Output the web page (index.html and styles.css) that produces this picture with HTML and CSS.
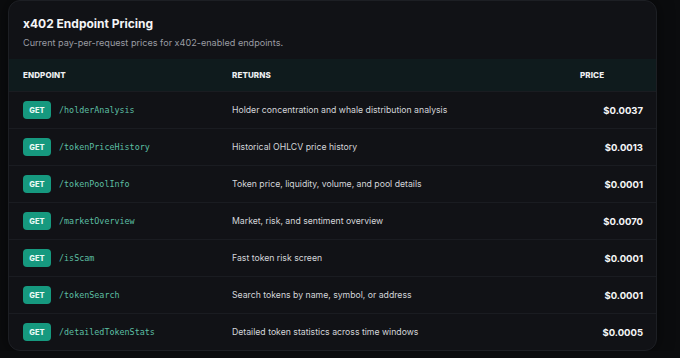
FILE: index.html
```html
<!DOCTYPE html>
<html lang="en">

<head>
    <meta charset="UTF-8" />
    <meta name="viewport" content="width=device-width, initial-scale=1.0" />
    <title>x402 Endpoint Pricing</title>
    <link rel="stylesheet" href="styles.css">
</head>

<body>
    <section class="card">
        <div class="card-head">
            <h2>x402 Endpoint Pricing</h2>
            <p>Current pay-per-request prices for x402-enabled endpoints.</p>
        </div>

        <div class="table">
            <div class="row head">
                <div>Endpoint</div>
                <div>Returns</div>
                <div>Price</div>
            </div>
            <div class="row">
                <div class="ep"><span class="badge">GET</span><code>/holderAnalysis</code></div>
                <div class="ret">Holder concentration and whale distribution analysis</div>
                <div class="price">$0.0037</div>
            </div>
            <div class="row">
                <div class="ep"><span class="badge">GET</span><code>/tokenPriceHistory</code></div>
                <div class="ret">Historical OHLCV price history</div>
                <div class="price">$0.0013</div>
            </div>
            <div class="row">
                <div class="ep"><span class="badge">GET</span><code>/tokenPoolInfo</code></div>
                <div class="ret">Token price, liquidity, volume, and pool details</div>
                <div class="price">$0.0001</div>
            </div>
            <div class="row">
                <div class="ep"><span class="badge">GET</span><code>/marketOverview</code></div>
                <div class="ret">Market, risk, and sentiment overview</div>
                <div class="price">$0.0070</div>
            </div>
            <div class="row">
                <div class="ep"><span class="badge">GET</span><code>/isScam</code></div>
                <div class="ret">Fast token risk screen</div>
                <div class="price">$0.0001</div>
            </div>
            <div class="row">
                <div class="ep"><span class="badge">GET</span><code>/tokenSearch</code></div>
                <div class="ret">Search tokens by name, symbol, or address</div>
                <div class="price">$0.0001</div>
            </div>
            <div class="row">
                <div class="ep"><span class="badge">GET</span><code>/detailedTokenStats</code></div>
                <div class="ret">Detailed token statistics across time windows</div>
                <div class="price">$0.0005</div>
            </div>
        </div>
    </section>
</body>

</html>
```

FILE: styles.css
```css
* {
    box-sizing: border-box;
    margin: 0;
    padding: 0;
}

body {
    font-family: Inter, 'Noto Sans', sans-serif;
    background: #0b0c0e;
    color: #f2f3f5;
    overflow: hidden;
}

.card {
    width: 649px;
    margin: 0 0 0 8px;
    background: #111216;
    border: 1px solid #1d1f24;
    border-radius: 12px;
    overflow: hidden;
    box-shadow: 0 0 16px rgba(0, 0, 0, 0.5);
}

.card-head {
    padding: 15px 14px 10px;
}

.card-head h2 {
    font-size: 12px;
    font-weight: 700;
    line-height: 16px;
    color: #f4f5f7;
}

.card-head p {
    margin-top: 5px;
    font-size: 9.1px;
    line-height: 12px;
    color: #9a9ca3;
}

.row {
    display: grid;
    grid-template-columns: 223px 348px 1fr;
    align-items: center;
    height: 37px;
    border-top: 1px solid #1a1c21;
}

.row > div:first-child {
    padding-left: 14px;
}

.row.head {
    height: 32px;
    border-top: none;
    background: #0f1b1d;
    font-size: 8px;
    font-weight: 800;
    letter-spacing: 0.1px;
    text-transform: uppercase;
    color: #eef0f2;
}

.ep {
    display: flex;
    align-items: center;
}

.badge {
    display: inline-flex;
    align-items: center;
    justify-content: center;
    width: 28px;
    height: 18px;
    margin-right: 8px;
    border-radius: 4px;
    background: #16997f;
    color: #eafaf5;
    font-size: 7.5px;
    font-weight: 800;
}

code {
    font-family: 'DejaVu Sans Mono', monospace;
    font-size: 8.4px;
    color: #5cbfa3;
}

.ret {
    font-size: 8.7px;
    color: #d4d6da;
}

.price {
    text-align: right;
    padding-right: 13px;
    font-size: 9.5px;
    font-weight: 700;
    color: #f6f7f8;
}
```
